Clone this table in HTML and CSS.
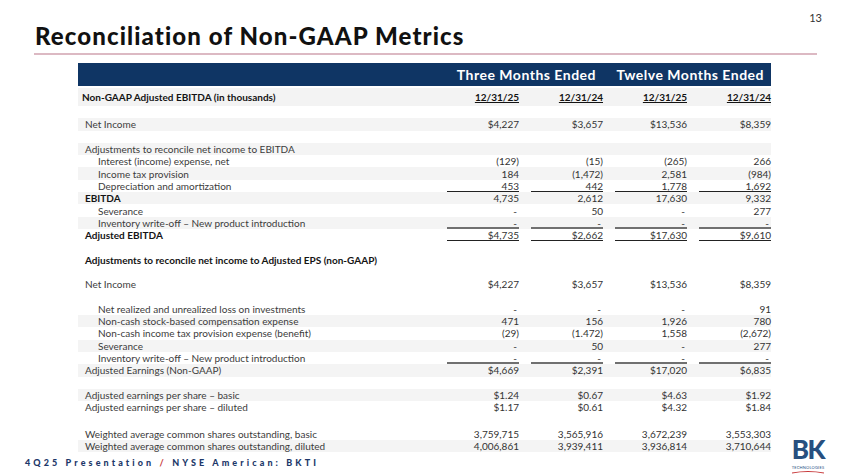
FILE: index.html
```html
<!DOCTYPE html>
<html>
<head>
<meta charset="utf-8">
<link rel="stylesheet" href="styles.css">
</head>
<body>
<div class="slide">
  <header class="top">
    <h1 class="title">Reconciliation of Non-GAAP Metrics</h1>
    <span class="pagenum">13</span>
  </header>
  <div class="rule"></div>

  <div class="table">
    <div class="bar">
      <span class="bar-spacer"></span>
      <span class="bar-title">Three Months Ended</span>
      <span class="bar-title">Twelve Months Ended</span>
    </div>

    <div class="row hdr"><span class="lab b l0">Non-GAAP Adjusted EBITDA (in thousands)</span><span class="num date">12/31/25</span><span class="num date">12/31/24</span><span class="num date">12/31/25</span><span class="num date">12/31/24</span></div>
    <div class="row sp"></div>
    <div class="row"><span class="lab l1">Net Income</span><span class="num">$4,227</span><span class="num">$3,657</span><span class="num">$13,536</span><span class="num">$8,359</span></div>
    <div class="row sp"></div>
    <div class="row"><span class="lab l1">Adjustments to reconcile net income to EBITDA</span><span class="num"></span><span class="num"></span><span class="num"></span><span class="num"></span></div>
    <div class="row"><span class="lab l2">Interest (income) expense, net</span><span class="num">(129)</span><span class="num">(15)</span><span class="num">(265)</span><span class="num">266</span></div>
    <div class="row"><span class="lab l2">Income tax provision</span><span class="num">184</span><span class="num">(1,472)</span><span class="num">2,581</span><span class="num">(984)</span></div>
    <div class="row ul"><span class="lab l2">Depreciation and amortization</span><span class="num">453</span><span class="num">442</span><span class="num">1,778</span><span class="num">1,692</span></div>
    <div class="row"><span class="lab b l1">EBITDA</span><span class="num">4,735</span><span class="num">2,612</span><span class="num">17,630</span><span class="num">9,332</span></div>
    <div class="row"><span class="lab l2">Severance</span><span class="num z">-</span><span class="num">50</span><span class="num z">-</span><span class="num">277</span></div>
    <div class="row ul2"><span class="lab l2">Inventory write-off – New product introduction</span><span class="num z">-</span><span class="num z">-</span><span class="num z">-</span><span class="num z">-</span></div>
    <div class="row ul"><span class="lab b l1">Adjusted EBITDA</span><span class="num">$4,735</span><span class="num">$2,662</span><span class="num">$17,630</span><span class="num">$9,610</span></div>
    <div class="row sp"></div>
    <div class="row"><span class="lab b l1">Adjustments to reconcile net income to Adjusted EPS (non-GAAP)</span><span class="num"></span><span class="num"></span><span class="num"></span><span class="num"></span></div>
    <div class="row sp"></div>
    <div class="row"><span class="lab l1">Net Income</span><span class="num">$4,227</span><span class="num">$3,657</span><span class="num">$13,536</span><span class="num">$8,359</span></div>
    <div class="row sp"></div>
    <div class="row"><span class="lab l2">Net realized and unrealized loss on investments</span><span class="num z">-</span><span class="num z">-</span><span class="num z">-</span><span class="num">91</span></div>
    <div class="row"><span class="lab l2">Non-cash stock-based compensation expense</span><span class="num">471</span><span class="num">156</span><span class="num">1,926</span><span class="num">780</span></div>
    <div class="row"><span class="lab l2">Non-cash income tax provision expense (benefit)</span><span class="num">(29)</span><span class="num">(1.472)</span><span class="num">1,558</span><span class="num">(2,672)</span></div>
    <div class="row"><span class="lab l2">Severance</span><span class="num z">-</span><span class="num">50</span><span class="num z">-</span><span class="num">277</span></div>
    <div class="row ul2"><span class="lab l2">Inventory write-off – New product introduction</span><span class="num z">-</span><span class="num z">-</span><span class="num z">-</span><span class="num z">-</span></div>
    <div class="row"><span class="lab l1">Adjusted Earnings (Non-GAAP)</span><span class="num">$4,669</span><span class="num">$2,391</span><span class="num">$17,020</span><span class="num">$6,835</span></div>
    <div class="row sp"></div>
    <div class="row"><span class="lab l1">Adjusted earnings per share – basic</span><span class="num">$1.24</span><span class="num">$0.67</span><span class="num">$4.63</span><span class="num">$1.92</span></div>
    <div class="row"><span class="lab l1">Adjusted earnings per share – diluted</span><span class="num">$1.17</span><span class="num">$0.61</span><span class="num">$4.32</span><span class="num">$1.84</span></div>
    <div class="row sp sp2"></div>
    <div class="row"><span class="lab l1">Weighted average common shares outstanding, basic</span><span class="num">3,759,715</span><span class="num">3,565,916</span><span class="num">3,672,239</span><span class="num">3,553,303</span></div>
    <div class="row"><span class="lab l1">Weighted average common shares outstanding, diluted</span><span class="num">4,006,861</span><span class="num">3,939,411</span><span class="num">3,936,814</span><span class="num">3,710,644</span></div>
  </div>

  <footer class="bottom">
    <span class="foot">4Q25 Presentation <span class="slash">/</span> NYSE American: BKTI</span>
    <div class="logo">
      <span class="logo-bk">BK</span>
      <span class="logo-sub">TECHNOLOGIES</span>
      <svg class="logo-swoosh" width="34" height="4" viewBox="0 0 34 4"><path d="M1 3 Q17 0 33 3" stroke="#c8393b" stroke-width="1.2" fill="none"/></svg>
    </div>
  </footer>
</div>
</body>
</html>
```

FILE: styles.css
```css
* { box-sizing: border-box; }
html, body { margin: 0; padding: 0; background: #ffffff; }
body { font-family: "Lato", "Liberation Sans", sans-serif; color: #333333; }

.slide { width: 845px; height: 475px; overflow: hidden; }

.top {
  display: flex;
  justify-content: space-between;
  align-items: flex-start;
  padding: 11px 23px 0 35px;
  height: 50px;
}
.title {
  margin: 11px 0 0 0;
  font-size: 24px;
  line-height: 28px;
  font-weight: 900;
  color: #111111;
  letter-spacing: 1.1px;
}
.pagenum {
  font-size: 11px;
  line-height: 14px;
  color: #333333;
}

.rule {
  margin: 3px 28px 0 34px;
  height: 2px;
  background: #dcb9c3;
}

.table {
  margin: 8px 0 0 78px;
  width: 693px;
}

.bar {
  display: grid;
  grid-template-columns: 357px 168px 168px;
  height: 23px;
  background: #0f3564;
  color: #ffffff;
  font-size: 14px;
  font-weight: 700;
  line-height: 23px;
  letter-spacing: 0.5px;
}
.bar-title { text-align: right; padding-right: 7px; }

.row {
  display: grid;
  grid-template-columns: 357px repeat(4, 84px);
  height: 12.3px;
  font-size: 10px;
  line-height: 12px;
  align-items: center;
}
.row:nth-child(even) { background: #f4f4f4; }
.row.hdr { height: 18px; margin-top: 2px; background: #f3f3f3; }
.row.sp { background: #ffffff; }
.row.sp2 { height: 14px; }

.lab { color: #3c3c3c; white-space: nowrap; }
.lab.b { font-weight: 700; color: #141414; }
.l0 { padding-left: 4px; }
.l1 { padding-left: 7px; }
.l2 { padding-left: 20px; }

.num {
  margin-left: 12px;
  height: 100%;
  text-align: right;
  color: #333333;
  display: flex;
  align-items: center;
  justify-content: flex-end;
}
.num.z { padding-right: 2px; }
.num.date { font-weight: 700; text-decoration: underline; color: #141414; }

.row.ul .num { box-shadow: inset 0 -1px 0 #222222; }
.row.ul2 .num { box-shadow: inset 0 -2px 0 #707070; }

.bottom {
  display: flex;
  justify-content: space-between;
  align-items: flex-start;
  padding: 0 20px 0 25px;
  margin-top: 5px;
}
.foot {
  font-size: 9px;
  line-height: 12px;
  font-weight: 900;
  letter-spacing: 3.1px;
  color: #1d3869;
  white-space: nowrap;
}
.slash { color: #c8393b; }

.logo {
  margin-top: -23px;
  display: flex;
  flex-direction: column;
  align-items: center;
  width: 34px;
}
.logo-bk {
  font-size: 26px;
  line-height: 31px;
  font-weight: 900;
  color: #27507f;
  letter-spacing: -1.5px;
}
.logo-sub {
  font-size: 4px;
  line-height: 5px;
  color: #27507f;
  letter-spacing: 0.2px;
  white-space: nowrap;
}
.logo-swoosh { display: block; }
```
